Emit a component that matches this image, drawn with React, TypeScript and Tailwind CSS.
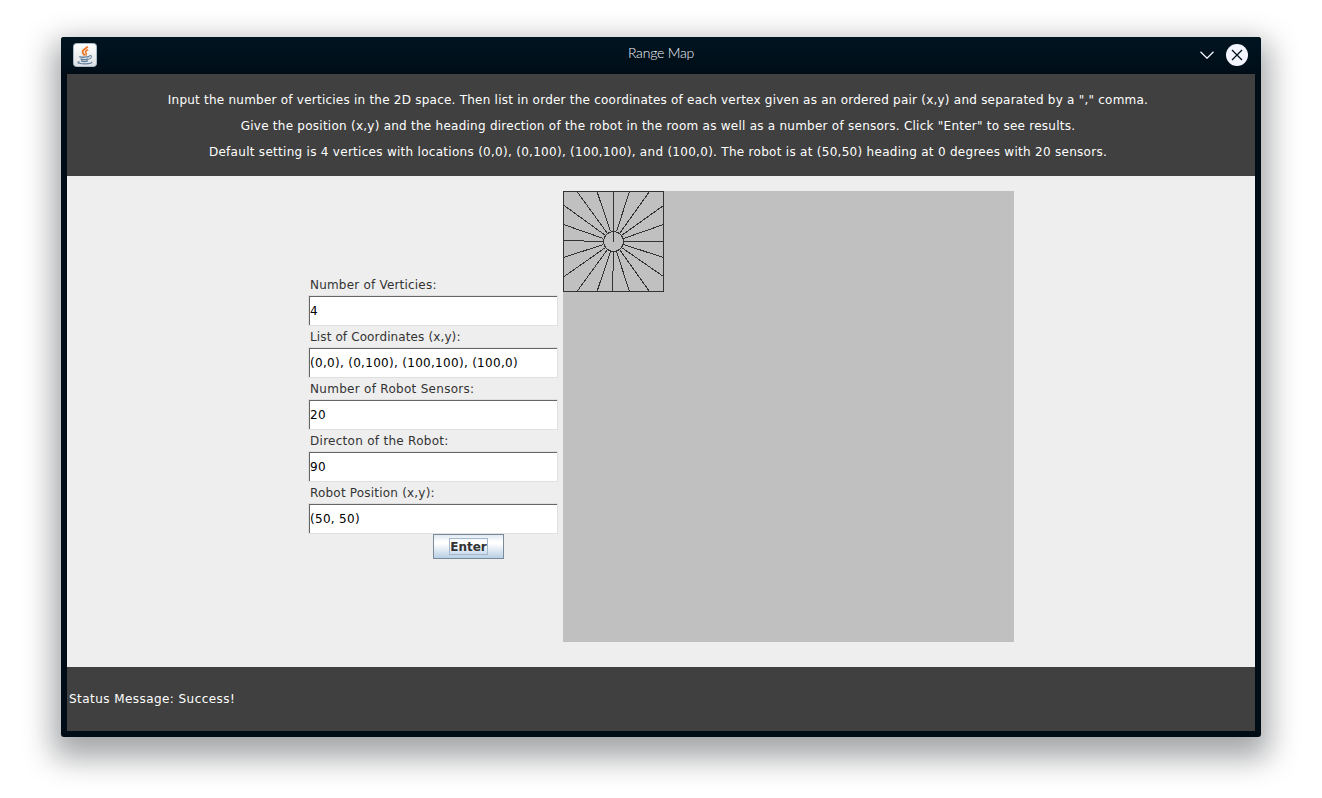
import React from "react";

const instructions = [
  {
    text: 'Input the number of verticies in the 2D space. Then list in order the coordinates of each vertex given as an ordered pair (x,y) and separated by a "," comma.',
    style: "tracking-[0.23px]",
  },
  {
    text: 'Give the position (x,y) and the heading direction of the robot in the room as well as a number of sensors. Click "Enter" to see results.',
    style: "tracking-[0.25px]",
  },
  {
    text: "Default setting is 4 vertices with locations (0,0), (0,100), (100,100), and (100,0). The robot is at (50,50) heading at 0 degrees with 20 sensors.",
    style: "tracking-[0.285px]",
  },
];

const fields = [
  { label: "Number of Verticies:", value: "4", style: "tracking-[0.2px]" },
  { label: "List of Coordinates (x,y):", value: "(0,0), (0,100), (100,100), (100,0)", style: "tracking-[0.12px]" },
  { label: "Number of Robot Sensors:", value: "20", style: "tracking-[0.29px]" },
  { label: "Directon of the Robot:", value: "90", style: "tracking-[0.28px]" },
  { label: "Robot Position (x,y):", value: "(50, 50)", style: "tracking-[0.2px]" },
];

// Sensor rays as [x1, y1, x2, y2] in room coordinates
const rays = [
  [50, 50, 50, 0],
  [53, 40, 66, 0],
  [56, 42, 86, 0],
  [58, 44, 100, 14],
  [60, 47, 100, 33],
  [60, 50, 100, 50],
  [60, 53, 100, 66],
  [58, 56, 100, 85],
  [56, 58, 86, 100],
  [53, 60, 66, 100],
  [50, 60, 49, 100],
  [47, 60, 33.5, 100],
  [44, 58, 13.5, 100],
  [42, 56, 0, 85.5],
  [40, 53, 0, 66],
  [40, 50, 0, 49],
  [40, 47, 0, 33],
  [42, 44, 0, 13.5],
  [44, 42, 13.5, 0],
  [47, 40, 33.5, 0],
];

function JavaIcon() {
  return (
    <svg width="24" height="24" viewBox="0 0 24 24" fill="none">
      <defs>
        <linearGradient id="tile" x1="0" y1="0" x2="0" y2="1">
          <stop offset="0" stopColor="#ffffff" />
          <stop offset="1" stopColor="#dcdfe2" />
        </linearGradient>
      </defs>
      <rect x="0.5" y="0.5" width="23" height="23" rx="3" fill="url(#tile)" stroke="#a9bccb" />
      <path d="M14.800 3.600c-1.500 1.600-5.300 2.900-5.300 5.200 0 1.500 1.500 2.300 2.200 3.700" stroke="#ed7420" strokeWidth="1.800" />
      <path d="M15.200 6.800c-2.400.900-3.300 1.700-2.300 3.100.7 1 .5 1.700-.2 2.700" stroke="#ed7420" strokeWidth="1.500" />
      <path d="M6.300 13.600c2 .8 8 .8 10.200-.2M7.500 15.800c2 .8 6 .8 8 0M8 17.900c2 .8 5 .8 7 0" stroke="#5f7f9d" strokeWidth="1.400" />
      <path d="M16.300 12.600c3.200-.9 3 2.700-.6 3.700" stroke="#6d8aa5" strokeWidth="1.100" />
      <path d="M6.500 18.700c-4.500 1.300 2 2.100 6 2.100 4.500 0 7-.7 6-1.900" stroke="#5f7f9d" strokeWidth="1.200" />
    </svg>
  );
}

function TitleBar() {
  return (
    <div className="grid h-[37px] grid-cols-[1fr_auto_1fr] items-center bg-gradient-to-b from-[#001521] to-[#000d17] px-3 pb-[2px]">
      <JavaIcon />
      <h1 className="pb-1 font-['Lato',sans-serif] text-[14px] leading-5 font-light tracking-[-0.2px] text-[#f4f6ff]">Range Map</h1>
      <div className="flex items-center justify-end gap-[11px]">
        <svg width="14" height="8" viewBox="0 0 14 8" fill="none">
          <path d="M0.500 0.700 7 7.200 13.500 0.700" stroke="#f3f5ff" strokeWidth="1.300" />
        </svg>
        <svg width="24" height="24" viewBox="0 0 24 24" fill="none">
          <circle cx="12" cy="12" r="11" fill="#f4f5ff" />
          <path d="M7 7l10 10M17 7 7 17" stroke="#001019" strokeWidth="1.300" />
        </svg>
      </div>
    </div>
  );
}

function RangeMap() {
  return (
    <div className="h-[451px] w-[451px] bg-[#c0c0c0]">
      <svg width="101" height="101" viewBox="-0.5 -0.5 101 101" fill="none" stroke="#333333" strokeWidth="1" shapeRendering="crispEdges">
        <rect x="0" y="0" width="100" height="100" />
        <circle cx="50" cy="50" r="10" />
        {rays.map(([x1, y1, x2, y2], i) => (
          <line key={i} x1={x1} y1={y1} x2={x2} y2={y2} />
        ))}
      </svg>
    </div>
  );
}

export default function App() {
  return (
    <div className="h-[798px] w-[1322px] overflow-hidden bg-white px-[61px] pt-[37px] font-['DejaVu_Sans',sans-serif] text-[12px]">
      <div className="flex h-[700px] w-[1200px] flex-col overflow-hidden rounded-[3px] bg-[#000d17] shadow-[0_13px_30px_8px_rgba(0,8,14,0.36)]">
        <TitleBar />
        <div className="mx-[6px] mb-[6px] flex flex-1 flex-col">
          <header className="flex h-[102px] flex-col items-center bg-[#404040] pt-[13px] pr-[6px] text-white">
            {instructions.map((line) => (
              <p key={line.text} className={"h-[26px] leading-[26px] whitespace-nowrap " + line.style}>
                {line.text}
              </p>
            ))}
          </header>
          <main className="flex h-[491px] bg-[#eeeeee] pt-[15px] pl-[241px]">
            <form className="mr-[5px] flex w-[250px] flex-col pt-[83px]" onSubmit={(e) => e.preventDefault()}>
              {fields.map((field) => (
                <label key={field.label} className="block h-[52px] text-[#333333]">
                  <span className={"block h-[21px] pl-[2px] leading-[23px] " + field.style}>{field.label}</span>
                  <span className="block border border-[#e0e0e0]">
                    <input
                      className="block h-[29px] w-full border-t border-l border-[#666666] bg-white pb-[1px] text-[12px] tracking-[0.3px] text-black outline-none"
                      defaultValue={field.value}
                    />
                  </span>
                </label>
              ))}
              <button className="ml-[125px] flex h-[25px] w-[71px] items-center justify-center border border-[#7a8a99] bg-[linear-gradient(#dfe9f3,#ffffff_30%,#ffffff_38%,#b8cfe5)] font-bold text-[#333333]">
                <span className="h-[17px] border border-[#a3b8cc] leading-[16px]">Enter</span>
              </button>
            </form>
            <RangeMap />
          </main>
          <footer className="h-[64px] bg-[#404040] pl-[2px] leading-[65px] tracking-[0.44px] text-white">Status Message: Success!</footer>
        </div>
      </div>
    </div>
  );
}
